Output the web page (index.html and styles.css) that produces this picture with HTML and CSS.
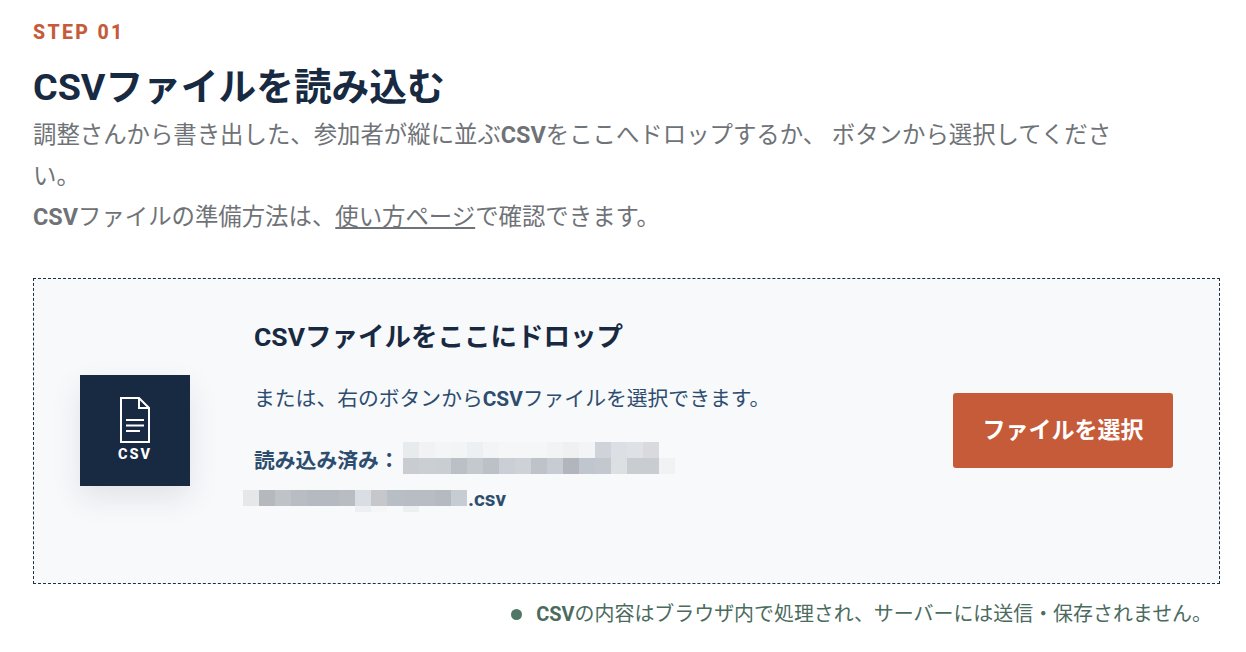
FILE: index.html
```html
<!DOCTYPE html>
<html lang="ja">
<head>
<meta charset="utf-8">
<title>CSV</title>
<link rel="stylesheet" href="styles.css">
</head>
<body>
<main class="step">
  <p class="eyebrow">STEP 01</p>
  <h1 class="title">CSVファイルを読み込む</h1>
  <p class="lead">調整さんから書き出した、参加者が縦に並ぶ<b>CSV</b>をここへドロップするか、 ボタンから選択してください。<br><b>CSV</b>ファイルの準備方法は、<a href="#" class="link">使い方ページ</a>で確認できます。</p>
  <section class="drop">
    <div class="badge">
      <svg class="badge-icon" viewBox="0 0 30 46" width="30" height="46" fill="none" stroke="#fff" stroke-width="2">
        <path d="M1 1H19L29 11V45H1Z"/>
        <path d="M19 1V11H29"/>
        <path d="M6 23H24M6 28.500H24M6 34H20"/>
      </svg>
      <span class="badge-label">CSV</span>
    </div>
    <div class="drop-body">
      <h2 class="drop-title">CSVファイルをここにドロップ</h2>
      <p class="drop-note">または、右のボタンから<b>CSV</b>ファイルを選択できます。</p>
      <p class="loaded"><span class="loaded-label">読み込み済み：</span><span class="filename">.csv</span></p>
    </div>
    <button class="pick" type="button">ファイルを選択</button>
  </section>
  <p class="privacy"><span class="dot"></span><span><b>CSV</b>の内容はブラウザ内で処理され、サーバーには送信・保存されません。</span></p>
</main>
<svg class="mosaic" width="432" height="70" viewBox="0 0 432 70" aria-hidden="true">
  <g>
    <rect x="160" y="0" width="16" height="16" fill="#e8ebee"/><rect x="176" y="0" width="16" height="16" fill="#f0f2f4"/><rect x="192" y="0" width="16" height="16" fill="#f4f5f7"/><rect x="208" y="0" width="16" height="16" fill="#f2f4f6"/><rect x="224" y="0" width="16" height="16" fill="#edf0f3"/><rect x="240" y="0" width="16" height="16" fill="#f2f4f6"/><rect x="256" y="0" width="48" height="16" fill="#f5f6f8"/><rect x="304" y="0" width="16" height="16" fill="#f2f3f5"/><rect x="320" y="0" width="16" height="16" fill="#eff0f2"/><rect x="336" y="0" width="16" height="16" fill="#f2f4f6"/><rect x="352" y="0" width="16" height="16" fill="#d0d3d9"/><rect x="368" y="0" width="16" height="16" fill="#dcdfe3"/><rect x="384" y="0" width="16" height="16" fill="#dee1e5"/><rect x="400" y="0" width="16" height="16" fill="#d8dade"/>
    <rect x="160" y="16" width="16" height="16" fill="#c9cdd1"/><rect x="176" y="16" width="16" height="16" fill="#cbcfd3"/><rect x="192" y="16" width="16" height="16" fill="#c9ced2"/><rect x="208" y="16" width="16" height="16" fill="#bbc0c6"/><rect x="224" y="16" width="16" height="16" fill="#c4c9ce"/><rect x="240" y="16" width="16" height="16" fill="#bcc1c7"/><rect x="256" y="16" width="16" height="16" fill="#cbcfd5"/><rect x="272" y="16" width="16" height="16" fill="#ced1d5"/><rect x="288" y="16" width="16" height="16" fill="#bec3c9"/><rect x="304" y="16" width="16" height="16" fill="#c6ccd2"/><rect x="320" y="16" width="16" height="16" fill="#b2b6bc"/><rect x="336" y="16" width="16" height="16" fill="#c0c6ce"/><rect x="352" y="16" width="16" height="16" fill="#c3c8ce"/><rect x="368" y="16" width="16" height="16" fill="#dde0e3"/><rect x="384" y="16" width="32" height="16" fill="#c9cdd1"/><rect x="416" y="16" width="16" height="16" fill="#f1f2f4"/>
    <rect x="0" y="48" width="16" height="16" fill="#e6e7e9"/><rect x="16" y="48" width="16" height="16" fill="#b5b9be"/><rect x="32" y="48" width="16" height="16" fill="#bfc3c8"/><rect x="48" y="48" width="16" height="16" fill="#b9bdc3"/><rect x="64" y="48" width="16" height="16" fill="#b5bac1"/><rect x="80" y="48" width="16" height="16" fill="#b5bac0"/><rect x="96" y="48" width="16" height="16" fill="#b9bdc2"/><rect x="112" y="48" width="16" height="16" fill="#d9dee4"/><rect x="128" y="48" width="16" height="16" fill="#c5c7ca"/><rect x="144" y="48" width="16" height="16" fill="#b8bec5"/><rect x="160" y="48" width="32" height="16" fill="#b7bdc3"/><rect x="192" y="48" width="16" height="16" fill="#b4bac0"/><rect x="208" y="48" width="16" height="16" fill="#c5ccd2"/>
    <rect x="112" y="64" width="16" height="6" fill="#eeeff2"/><rect x="128" y="64" width="16" height="6" fill="#f5f6f8"/><rect x="160" y="64" width="16" height="6" fill="#eeeff1"/>
  </g>
</svg>
</body>
</html>
```
FILE: styles.css
```css
* { box-sizing: border-box; }
html, body { margin: 0; padding: 0; }
body {
  position: relative;
  height: 652px;
  overflow: hidden;
  background: #fff;
  font-family: Roboto, "Noto Sans CJK JP", sans-serif;
}
.step { padding: 21px 26px 0 33px; }
.eyebrow {
  margin: 0;
  color: #c65b39;
  font-size: 19.500px;
  line-height: 24px;
  font-weight: 800;
  letter-spacing: 0.12em;
}
.title {
  margin: 16px 0 0;
  color: #182a42;
  font-size: 37.700px;
  line-height: 52px;
  font-weight: 700;
}
.lead {
  margin: 2px 0 0;
  max-width: 1090px;
  color: #6f7377;
  font-size: 23.400px;
  line-height: 41px;
}
.link { color: inherit; }
.drop {
  display: flex;
  align-items: center;
  margin-top: 40px;
  height: 306px;
  border: 1px dashed #1c3047;
  background: #f8f9fb;
  padding: 0 46px;
}
.badge {
  flex: none;
  display: flex;
  flex-direction: column;
  align-items: center;
  justify-content: center;
  width: 110px;
  height: 111px;
  margin-bottom: 1px;
  background: #182a42;
  color: #fff;
  box-shadow: 0 12px 28px rgba(24, 42, 66, 0.1);
}
.badge-icon { display: block; }
.badge-label {
  font-size: 14.500px;
  line-height: 18px;
  font-weight: 800;
  letter-spacing: 0.14em;
  margin-top: 3px;
}
.drop-body { flex: 1; min-width: 0; margin: 0 0 26px 64px; }
.drop-title {
  margin: 0;
  color: #182a42;
  font-size: 26.500px;
  line-height: 38px;
  font-weight: 700;
}
.drop-note {
  margin: 27px 0 0;
  color: #2d4d6e;
  font-size: 20.800px;
  line-height: 32px;
}
.loaded {
  margin: 27px 0 0;
  color: #2d4d6e;
  font-size: 20.800px;
  line-height: 38px;
  font-weight: 700;
}
.loaded-label { display: block; }
.filename { display: block; padding-left: 214px; }
.pick {
  flex: none;
  width: 220px;
  height: 75px;
  margin-bottom: 1px;
  border: 0;
  border-radius: 3px;
  background: #c65b39;
  color: #fff;
  font: 700 23px/30px Roboto, "Noto Sans CJK JP", sans-serif;
}
.privacy {
  display: flex;
  align-items: center;
  justify-content: flex-end;
  gap: 14px;
  margin: 16px 8px 0 0;
  color: #4a6b5d;
  font-size: 19.950px;
  line-height: 28px;
}
.dot { width: 11px; height: 11px; border-radius: 50%; background: #4f7666; }
.mosaic { position: absolute; left: 243px; top: 442px; display: block; }
```
